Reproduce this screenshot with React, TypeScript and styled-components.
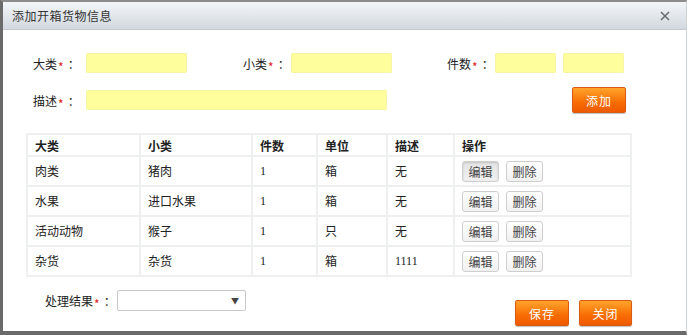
import React from 'react';
import styled, { createGlobalStyle } from 'styled-components';

const GlobalStyle = createGlobalStyle`
  html, body {
    margin: 0;
    padding: 0;
    background: #fff;
  }
  body {
    font-family: "Noto Sans CJK SC", sans-serif;
    font-size: 12px;
    color: #222;
  }
`;

const Dialog = styled.div`
  width: 687px;
  height: 335px;
  box-sizing: border-box;
  border-top: 2px solid #8c8c8c;
  border-left: 3px solid #6a6a6a;
  border-right: 1px solid #cdd2d8;
  border-bottom: 4px solid #6a6a6a;
  display: flex;
  flex-direction: column;
  background: #fff;
`;

const TitleBar = styled.div`
  height: 28px;
  box-sizing: border-box;
  padding: 0 16px 0 9px;
  display: flex;
  align-items: center;
  justify-content: space-between;
  background: linear-gradient(#f3f6f9, #d2d8de);
  border-bottom: 1px solid #c3c9cf;
`;

const Title = styled.span`
  font-size: 12px;
  color: #333;
  letter-spacing: 0.5px;
`;

const CloseX = styled.svg`
  width: 10px;
  height: 10px;
`;

const Body = styled.div`
  flex: 1;
  padding-top: 23px;
  display: flex;
  flex-direction: column;
`;

const Form = styled.div`
  width: 593px;
  padding-left: 30px;
  display: flex;
  flex-direction: column;
  gap: 14px;
`;

const Row = styled.div`
  display: flex;
  align-items: center;
`;

const Label = styled.label<{ $w: number; $gap?: number }>`
  width: ${p => p.$w}px;
  margin-left: ${p => p.$gap || 0}px;
  font-size: 12px;
  color: #222;
  white-space: nowrap;
`;

const Star = styled.span`
  color: #e02020;
  font-size: 12px;
  position: relative;
  top: 3px;
  margin: 0 4px 0 1px;
`;

const Input = styled.div<{ $w: number; $gap?: number }>`
  width: ${p => p.$w}px;
  height: 20px;
  margin-left: ${p => p.$gap || 0}px;
  background: #fefe9c;
  border-radius: 2px;
  box-shadow: inset 0 0 0 1px #f6f6a6;
`;

const OrangeButton = styled.button<{ $w: number; $gap?: string }>`
  width: ${p => p.$w}px;
  height: 26px;
  margin-left: ${p => p.$gap || '0'};
  padding: 0;
  border: 1px solid #d95a10;
  border-radius: 2px;
  background: linear-gradient(#ffa42c, #f86c04 60%, #ee5a00);
  box-shadow: 0 1px 1px rgba(0, 0, 0, 0.25);
  color: #fff;
  font-family: "Noto Sans CJK SC", sans-serif;
  font-size: 12px;
  letter-spacing: 1px;
`;

const Table = styled.table`
  margin: 20px 0 0 23px;
  width: 604px;
  border-collapse: collapse;
  border: 2px solid #eef0f0;
  table-layout: fixed;
`;

const Th = styled.th<{ $w: number }>`
  width: ${p => p.$w - 9}px;
  height: 20px;
  padding: 0 0 0 7px;
  border: 2px solid #eef0f0;
  text-align: left;
  font-size: 12px;
  font-weight: bold;
  color: #222;
`;

const Td = styled.td`
  height: 28px;
  padding: 0 0 0 7px;
  border: 2px solid #eef0f0;
  font-family: "Liberation Serif", "Noto Sans CJK SC", serif;
  font-size: 12px;
  color: #222;
`;

const Ops = styled.div`
  display: flex;
  gap: 7px;
`;

const SmallButton = styled.button<{ $active?: boolean }>`
  width: 37px;
  height: 21px;
  padding: 0;
  border: 1px solid #cfcfcf;
  border-radius: 3px;
  background: ${p => (p.$active ? 'linear-gradient(#e4e4e4, #f0f0f0)' : 'linear-gradient(#ffffff, #f1f1f1)')};
  box-shadow: ${p => (p.$active ? 'inset 0 1px 2px rgba(0,0,0,0.15)' : 'none')};
  font-family: "Noto Sans CJK SC", sans-serif;
  font-size: 12px;
  color: #444;
`;

const Footer = styled.div`
  display: flex;
  align-items: flex-start;
  margin-top: 13px;
  padding-left: 42px;
`;

const Select = styled.div`
  width: 129px;
  height: 21px;
  box-sizing: border-box;
  border: 1px solid #c9c9c9;
  border-radius: 2px;
  display: flex;
  align-items: center;
  justify-content: flex-end;
  padding-right: 6px;
  font-size: 8px;
  color: #444;
`;

const FooterButtons = styled.div`
  margin: 10px 0 0 269px;
  display: flex;
`;

const rows = [
  ['肉类', '猪肉', '1', '箱', '无'],
  ['水果', '进口水果', '1', '箱', '无'],
  ['活动动物', '猴子', '1', '只', '无'],
  ['杂货', '杂货', '1', '箱', '1111'],
];

const cols: [string, number][] = [
  ['大类', 113],
  ['小类', 112],
  ['件数', 65],
  ['单位', 70],
  ['描述', 67],
  ['操作', 177],
];

const Req = ({ text }: { text: string }) => (
  <>
    {text}
    <Star>*</Star>：
  </>
);

export default function App() {
  return (
    <Dialog>
      <GlobalStyle />
      <TitleBar>
        <Title>添加开箱货物信息</Title>
        <CloseX viewBox="0 0 10 10">
          <path d="M1 1 L9 9 M9 1 L1 9" stroke="#6a6e73" strokeWidth="1.6" />
        </CloseX>
      </TitleBar>
      <Body>
        <Form>
          <Row>
            <Label $w={53}><Req text="大类" /></Label>
            <Input $w={101} />
            <Label $w={48} $gap={56}><Req text="小类" /></Label>
            <Input $w={101} />
            <Label $w={48} $gap={55}><Req text="件数" /></Label>
            <Input $w={61} />
            <Input $w={61} $gap={7} />
          </Row>
          <Row>
            <Label $w={53}><Req text="描述" /></Label>
            <Input $w={301} />
            <OrangeButton $w={54} $gap="auto">添加</OrangeButton>
          </Row>
        </Form>
        <Table>
          <thead>
            <tr>
              {cols.map(([c, w]) => (
                <Th key={c} $w={w}>{c}</Th>
              ))}
            </tr>
          </thead>
          <tbody>
            {rows.map((r, i) => (
              <tr key={i}>
                {r.map((v, j) => (
                  <Td key={j}>{v}</Td>
                ))}
                <Td>
                  <Ops>
                    <SmallButton $active={i === 0}>编辑</SmallButton>
                    <SmallButton>删除</SmallButton>
                  </Ops>
                </Td>
              </tr>
            ))}
          </tbody>
        </Table>
        <Footer>
          <Row>
            <Label $w={72}><Req text="处理结果" /></Label>
            <Select>▼</Select>
          </Row>
          <FooterButtons>
            <OrangeButton $w={54}>保存</OrangeButton>
            <OrangeButton $w={53} $gap="10px">关闭</OrangeButton>
          </FooterButtons>
        </Footer>
      </Body>
    </Dialog>
  );
}
